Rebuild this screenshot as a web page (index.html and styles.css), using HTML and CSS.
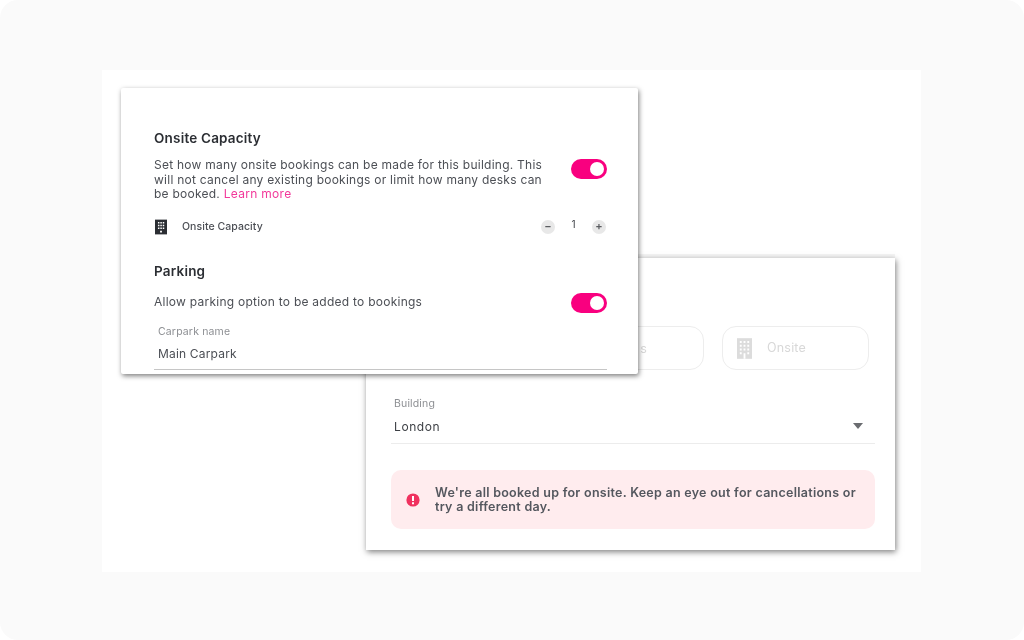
FILE: index.html
```html
<!DOCTYPE html>
<html lang="en">
<head>
<meta charset="utf-8">
<title>Onsite Capacity</title>
<link rel="stylesheet" href="styles.css">
</head>
<body>
<main class="frame">
  <div class="canvas">
    <section class="card card-back">
      <div class="choices">
        <div class="choice choice-hidden"><span class="choice-tail">s</span></div>
        <div class="choice">
          <svg class="choice-icon" viewBox="0 0 16 22" aria-hidden="true"><path fill="#dcdcdc" d="M0 0h16v22H0z"/><path fill="#fff" d="M3 3h2v2H3zM7 3h2v2H7zM11 3h2v2h-2zM3 7h2v2H3zM7 7h2v2H7zM11 7h2v2h-2zM3 11h2v2H3zM7 11h2v2H7zM11 11h2v2h-2zM3 15h2v2H3zM11 15h2v2h-2zM7 16h2v6H7z"/></svg>
          <span class="choice-text">Onsite</span>
        </div>
      </div>
      <div class="select">
        <label class="field-label">Building</label>
        <div class="select-row"><span>London</span><i class="caret"></i></div>
      </div>
      <div class="alert">
        <svg class="alert-icon" viewBox="0 0 14 14" aria-hidden="true"><circle cx="7" cy="7" r="6.6" fill="#f0325f"/><path fill="#fff" d="M6 3h2v5H6zM6 9.2h2v2H6z"/></svg>
        <p>We're all booked up for onsite. Keep an eye out for cancellations or try a different day.</p>
      </div>
    </section>

    <section class="card card-front">
      <h2>Onsite Capacity</h2>
      <div class="toggle-row toggle-row-top">
        <p>Set how many onsite bookings can be made for this building. This will not cancel any existing bookings or limit how many desks can be booked. <a href="#">Learn more</a></p>
        <span class="toggle"></span>
      </div>
      <div class="capacity">
        <svg class="building" viewBox="0 0 13 16" aria-hidden="true"><path fill="#2b2e33" d="M0 0h13v16H0z"/><path fill="#fff" d="M3.2 2.5h1.6v1.600H3.200zM5.800 2.500h1.600v1.600H5.800zM8.400 2.500H10v1.600H8.400zM3.200 5.500h1.600v1.600H3.200zM5.800 5.500h1.600v1.600H5.800zM8.400 5.500H10v1.600H8.400zM3.200 8.500h1.600v1.600H3.200zM5.800 8.500h1.600v1.600H5.800zM8.400 8.500H10v1.600H8.400zM5.500 12h2v2h-2z"/></svg>
        <span class="capacity-label">Onsite Capacity</span>
        <div class="stepper">
          <span class="step">&minus;</span>
          <span class="count">1</span>
          <span class="step">+</span>
        </div>
      </div>
      <h2 class="parking-title">Parking</h2>
      <div class="toggle-row toggle-row-parking">
        <p>Allow parking option to be added to bookings</p>
        <span class="toggle"></span>
      </div>
      <div class="carpark">
        <label class="field-label">Carpark name</label>
        <div class="carpark-value">Main Carpark</div>
      </div>
    </section>
  </div>
</main>
</body>
</html>
```

FILE: styles.css
```css
* { box-sizing: border-box; }
html, body { margin: 0; height: 100%; background: #fff; }
body { font-family: "Inter", "Liberation Sans", sans-serif; color: #4c4f55; }
.frame {
  width: 1024px; height: 640px; padding: 70px 103px 68px 102px;
  background: #fafafa; border-radius: 18px; overflow: hidden;
}
.canvas { position: relative; width: 819px; height: 502px; background: #fff; filter: blur(.3px); }
.card { position: absolute; background: #fff; }
.card-front {
  left: 19px; top: 18px; width: 517px; height: 286px; padding: 41px 31px 0 33px;
  border-radius: 2px;
  box-shadow: 1px 2px 5px rgba(0,0,0,.5);
}
.card-back {
  left: 264px; top: 188px; width: 529px; height: 292px; padding: 68px 20px 0 25px;
  box-shadow: 1px 2px 6px rgba(0,0,0,.5), 0 -4px 0 #f5f5f5;
}
h2 { margin: 0; font-size: 13.500px; line-height: 18px; font-weight: 600; letter-spacing: .2px; color: #2b2e33; }
p { margin: 0; }
.toggle-row { display: flex; justify-content: space-between; }
.toggle-row p { font-size: 12px; line-height: 14.500px; letter-spacing: .25px; color: #4c4f55; }
.toggle-row-top { margin-top: 11px; }
.toggle-row-top p { width: 393px; }
.toggle-row-top .toggle { margin-top: 1px; }
.toggle-row-parking { margin-top: 13px; align-items: center; }
a { color: #f2389a; text-decoration: none; letter-spacing: .3px; }
.toggle {
  position: relative; flex: none; width: 36px; height: 20px;
  border-radius: 10px; background: #f9007f;
}
.toggle::after {
  content: ""; position: absolute; right: 3px; top: 3px;
  width: 14px; height: 14px; border-radius: 50%; background: #fff;
}
.capacity { display: flex; align-items: center; margin-top: 16px; height: 18px; }
.building { width: 12px; height: 16px; flex: none; margin-left: 1px; }
.capacity-label { margin-left: 15px; font-size: 10.500px; font-weight: 500; letter-spacing: .06px; color: #4c4f55; }
.stepper { margin-left: auto; margin-right: 1px; display: flex; align-items: center; gap: 16px; }
.step {
  display: flex; align-items: center; justify-content: center;
  width: 14px; height: 14px; border-radius: 50%; background: #e8e8e8;
  font-size: 11px; line-height: 1; font-weight: 600; color: #5a5c60;
}
.count { width: 5px; font-size: 10px; text-align: center; color: #3c3f44; margin-top: -5px; }
.parking-title { margin-top: 26px; }
.field-label { display: block; font-size: 10.500px; letter-spacing: .15px; color: #8d8f93; }
.carpark { margin-top: 12px; height: 45px; padding-left: 4px; border-bottom: 1px solid #c6c6c6; }
.carpark-value { margin-top: 8px; font-size: 12px; letter-spacing: .18px; color: #4c4f55; }
.choices { display: flex; justify-content: flex-end; gap: 18px; padding-right: 6px; }
.choice {
  display: flex; align-items: center; gap: 15px;
  width: 147px; height: 44px; padding-left: 14px;
  border: 1px solid #ededed; border-radius: 14px;
  font-size: 12.500px; letter-spacing: .2px; color: #d8d8d8;
}
.choice-hidden { justify-content: flex-end; padding-right: 56px; }
.choice-text { margin-top: -2px; }
.choice-icon { width: 15px; height: 21px; flex: none; }
.select { margin-top: 27px; }
.field-label + .select-row { margin-top: 5px; }
.select .field-label { padding-left: 3px; font-size: 10.500px; }
.select-row {
  display: flex; align-items: center; justify-content: space-between;
  height: 29px; padding: 1px 12px 6px 3px; border-bottom: 1px solid #ececec;
  font-size: 12px; letter-spacing: .6px; color: #3c3f44;
}
.caret { width: 0; height: 0; border-left: 5.500px solid transparent; border-right: 5.500px solid transparent; border-top: 6px solid #6a6c70; margin-top: -1px; }
.alert {
  display: flex; align-items: center; gap: 15px; margin-top: 26px;
  height: 59px; padding: 1px 15px 0 15px; border-radius: 10px; background: #ffecee;
  font-size: 12.500px; line-height: 14.500px; font-weight: 600; letter-spacing: .27px; color: #54575e;
}
.alert-icon { width: 14px; height: 14px; flex: none; }
```
